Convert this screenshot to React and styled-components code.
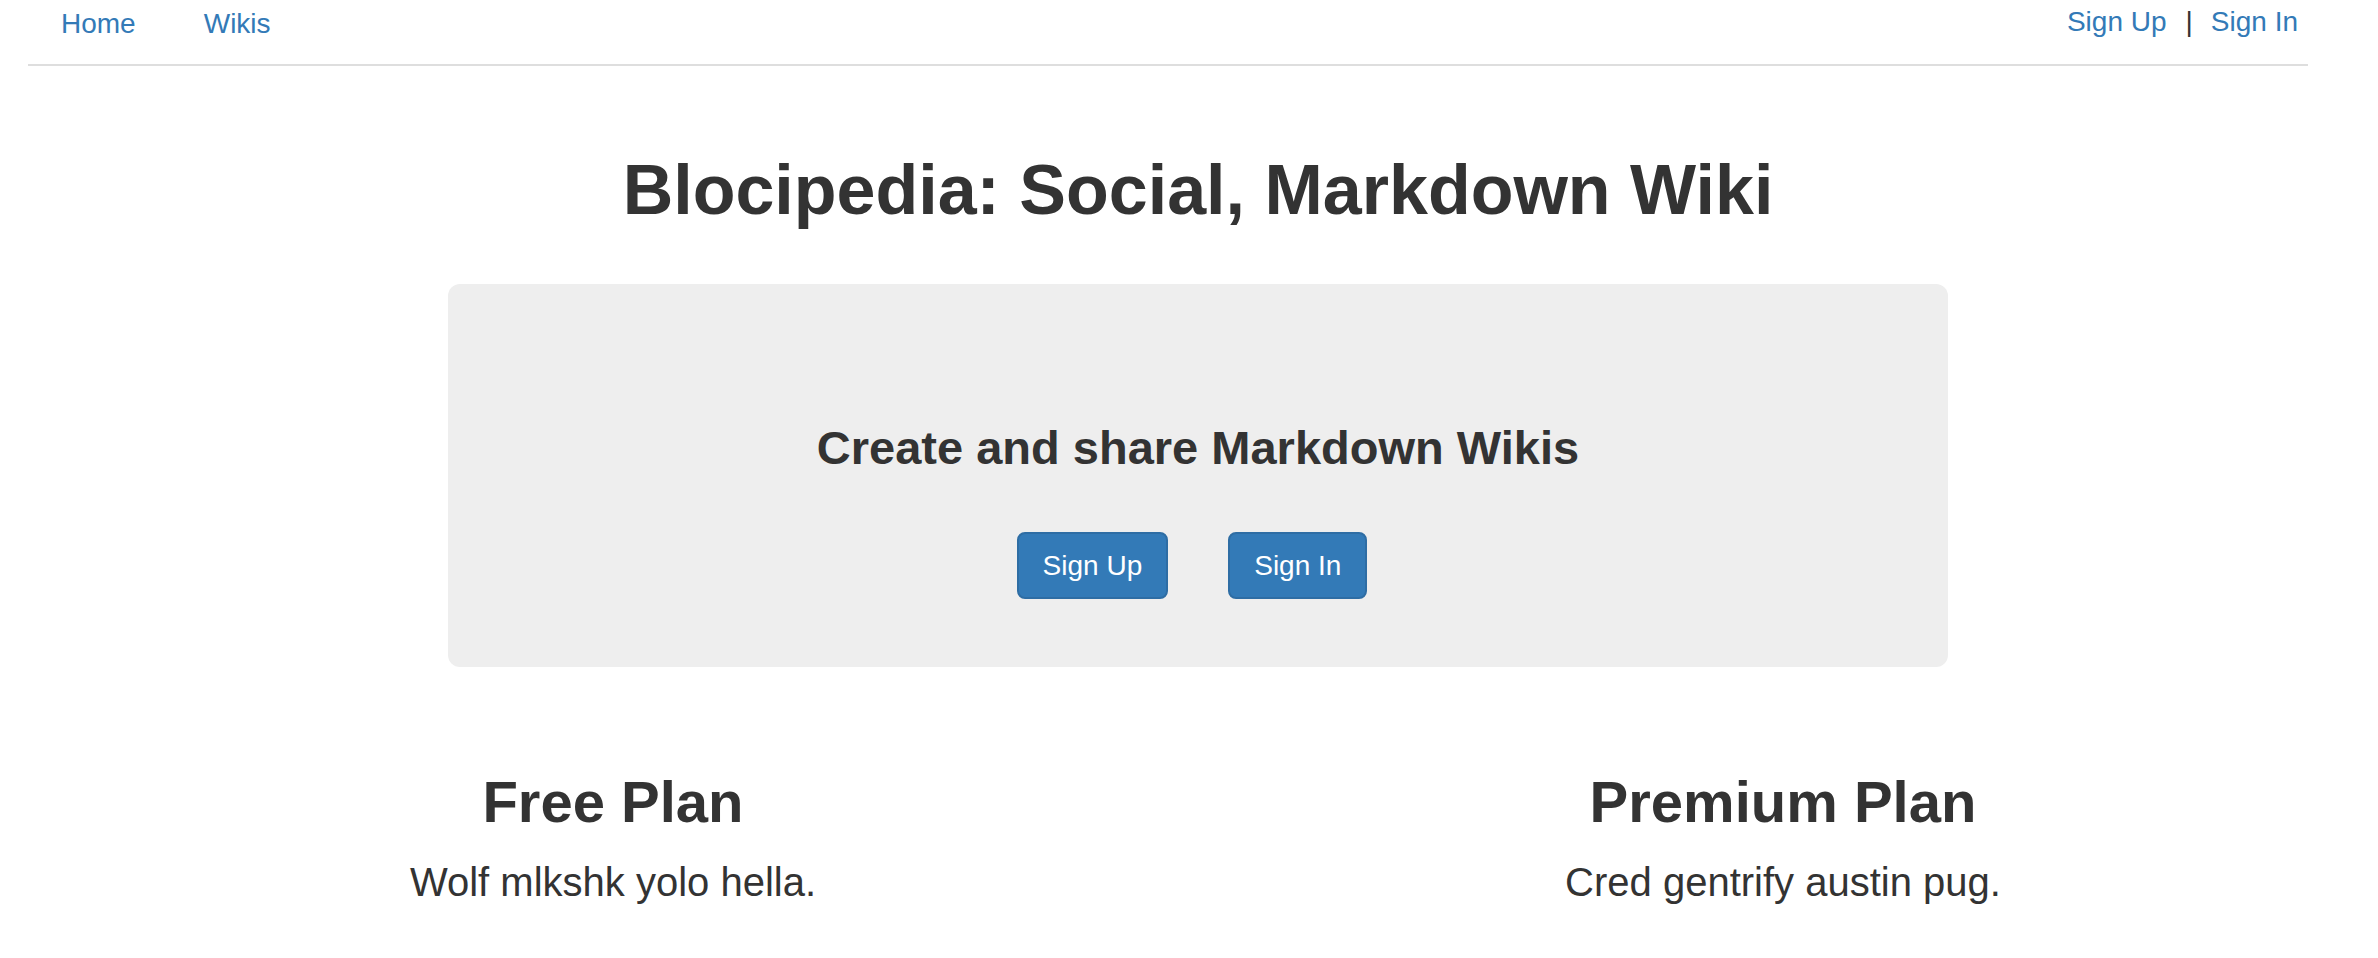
import React from "react";
import styled, { createGlobalStyle } from "styled-components";

const GlobalStyle = createGlobalStyle`
  body {
    margin: 0;
    background: #fff;
    color: #333;
    font-family: "Liberation Sans", Arial, sans-serif;
  }
  * { box-sizing: border-box; }
`;

const Header = styled.header`
  display: flex;
  justify-content: space-between;
  align-items: flex-start;
  height: 66px;
  margin: 0 70px 0 28px;
  border-bottom: 2px solid #dedede;
`;

const NavLeft = styled.nav`
  display: flex;
  gap: 68px;
  padding: 4px 0 0 33px;
`;

const NavRight = styled.nav`
  display: flex;
  align-items: center;
  padding: 2px 10px 0 0;
`;

const NavLink = styled.a`
  font-size: 28px;
  line-height: 40px;
  color: #337ab7;
  text-decoration: none;
`;

const Divider = styled.span`
  font-size: 28px;
  line-height: 40px;
  color: #333;
  margin: 0 18px 0 19px;
`;

const Main = styled.main`
  display: flex;
  flex-direction: column;
  align-items: center;
  padding-left: 28px;
  width: 2368px;
`;

const Title = styled.h1`
  margin: 86px 0 0;
  font-size: 70px;
  line-height: 77px;
  font-weight: 700;
  text-align: center;
`;

const Jumbotron = styled.section`
  width: 1500px;
  height: 383px;
  margin-top: 55px;
  padding-top: 138px;
  background: #eee;
  border-radius: 12px;
  display: flex;
  flex-direction: column;
  align-items: center;
`;

const Tagline = styled.h3`
  margin: 0;
  font-size: 47px;
  line-height: 52px;
  font-weight: 700;
`;

const ButtonRow = styled.div`
  display: flex;
  gap: 60px;
  margin-top: 58px;
  padding-right: 12px;
`;

const Button = styled.a`
  display: inline-flex;
  align-items: center;
  justify-content: center;
  height: 67px;
  padding: 0 24px;
  font-size: 28px;
  color: #fff;
  background: #337ab7;
  border: 2px solid #2e6da4;
  border-radius: 8px;
  text-decoration: none;
`;

const Plans = styled.div`
  display: grid;
  grid-template-columns: 1fr 1fr;
  width: 100%;
  margin-top: 103px;
`;

const Plan = styled.div`
  text-align: center;
`;

const PlanTitle = styled.h2`
  margin: 0;
  font-size: 58px;
  line-height: 64px;
  font-weight: 700;
`;

const Lead = styled.p`
  margin: 20px 0 0;
  font-size: 40px;
  line-height: 57px;
  font-weight: 400;
`;

const plans = [
  { name: "Free Plan", blurb: "Wolf mlkshk yolo hella." },
  { name: "Premium Plan", blurb: "Cred gentrify austin pug." },
];

const App = () => {
  return (
    <>
      <GlobalStyle />
      <Header>
        <NavLeft>
          <NavLink href="#">Home</NavLink>
          <NavLink href="#">Wikis</NavLink>
        </NavLeft>
        <NavRight>
          <NavLink href="#">Sign Up</NavLink>
          <Divider>|</Divider>
          <NavLink href="#">Sign In</NavLink>
        </NavRight>
      </Header>
      <Main>
        <Title>Blocipedia: Social, Markdown Wiki</Title>
        <Jumbotron>
          <Tagline>Create and share Markdown Wikis</Tagline>
          <ButtonRow>
            <Button href="#">Sign Up</Button>
            <Button href="#">Sign In</Button>
          </ButtonRow>
        </Jumbotron>
        <Plans>
          {plans.map((plan) => (
            <Plan key={plan.name}>
              <PlanTitle>{plan.name}</PlanTitle>
              <Lead>{plan.blurb}</Lead>
            </Plan>
          ))}
        </Plans>
      </Main>
    </>
  );
};

export default App;
